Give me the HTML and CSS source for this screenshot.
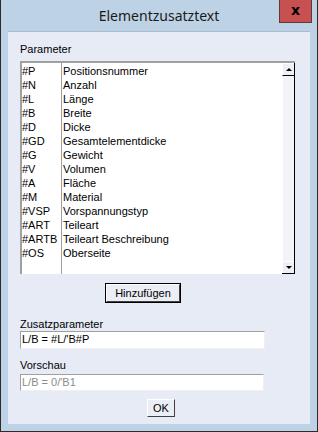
FILE: index.html
```html
<!DOCTYPE html>
<html lang="de">
<head>
  <meta charset="UTF-8">
  <title>Elementzusatztext</title>
  <link rel="stylesheet" href="styles.css">
</head>
<body>
  <div class="window">
    <div class="titlebar">
      <span class="title">Elementzusatztext</span>
      <span class="close-btn">x</span>
    </div>

    <div class="client">
      <div class="label label-first">Parameter</div>

      <div class="param-list">
        <div class="rows">
          <span>#P</span><span>Positionsnummer</span>
          <span>#N</span><span>Anzahl</span>
          <span>#L</span><span>Länge</span>
          <span>#B</span><span>Breite</span>
          <span>#D</span><span>Dicke</span>
          <span>#GD</span><span>Gesamtelementdicke</span>
          <span>#G</span><span>Gewicht</span>
          <span>#V</span><span>Volumen</span>
          <span>#A</span><span>Fläche</span>
          <span>#M</span><span>Material</span>
          <span>#VSP</span><span>Vorspannungstyp</span>
          <span>#ART</span><span>Teileart</span>
          <span>#ARTB</span><span>Teileart Beschreibung</span>
          <span>#OS</span><span>Oberseite</span>
        </div>
        <div class="scrollbar">
          <span class="sb-btn sb-up"></span>
          <span class="sb-track"></span>
          <span class="sb-btn sb-down"></span>
        </div>
      </div>

      <div class="btn-row">
        <button class="button button-default btn-add">Hinzufügen</button>
      </div>

      <div class="label label-extra">Zusatzparameter</div>
      <div class="field">L/B = #L/'B#P</div>

      <div class="label">Vorschau</div>
      <div class="field field-disabled">L/B = 0/'B1</div>

      <div class="btn-row btn-row-ok">
        <button class="button btn-ok">OK</button>
      </div>
    </div>
  </div>
</body>
</html>
```

FILE: styles.css
```css
body {
  margin: 0;
  font-family: "Liberation Sans", Arial, sans-serif;
  font-size: 11px;
  color: #000;
}

.window {
  width: 316px;
  height: 431px;
  background-color: #bdd2e5;
  border: 1px solid #2b2b2b;
  border-top: none;
  display: flex;
  flex-direction: column;
}

.titlebar {
  position: relative;
  height: 31px;
  display: flex;
  justify-content: center;
  align-items: center;
}

.title {
  font-family: "Noto Sans", sans-serif;
  font-size: 14px;
  color: #1a1a1a;
  margin-top: -1px;
}

.close-btn {
  position: absolute;
  top: 0;
  right: 5px;
  width: 31px;
  height: 20px;
  background-color: #c75050;
  border: 1px solid #5a3a3a;
  border-top: none;
  display: flex;
  justify-content: center;
  align-items: center;
  font-family: "DejaVu Sans", sans-serif;
  font-weight: bold;
  font-size: 14px;
  line-height: 1;
  padding-bottom: 2px;
  box-sizing: content-box;
}

.client {
  margin: 0 7px;
  height: 393px;
  background-color: #e6ebf5;
  border-top: 1px solid #a9bbcf;
  box-sizing: border-box;
  padding: 0 15px 0 12px;
  display: flex;
  flex-direction: column;
}

.label {
  height: 13px;
  line-height: 13px;
  margin-top: 10px;
  margin-bottom: 2px;
}

.label-first {
  margin-top: 11px;
  margin-bottom: 5px;
}

.label-extra {
  margin-top: 16px;
  margin-bottom: 0;
}

.param-list {
  height: 213px;
  width: 275px;
  display: flex;
  border-top: 2px solid #a0a0a0;
  border-left: 2px solid #a0a0a0;
  box-sizing: border-box;
}

.rows {
  flex: 1;
  display: grid;
  grid-template-columns: 41px 1fr;
  grid-auto-rows: 14px;
  align-content: start;
  padding-top: 1px;
  background: linear-gradient(#a0a0a0, #a0a0a0) no-repeat 39px 0 / 1px 100%, #fff;
}

.rows span {
  line-height: 14px;
  white-space: nowrap;
}

.scrollbar {
  width: 12px;
  display: flex;
  flex-direction: column;
  border-right: 1px solid #000;
  border-bottom: 1px solid #000;
  background-color: #f2f4f8;
}

.sb-btn {
  height: 11px;
  background-color: #eef0f4;
  border-top: 1px solid #fff;
  border-left: 1px solid #fff;
  border-bottom: 1px solid #000;
  position: relative;
}

.sb-btn::after {
  content: '';
  position: absolute;
  left: 3px;
  top: 4px;
  border-left: 3px solid transparent;
  border-right: 3px solid transparent;
}

.sb-up::after {
  border-bottom: 3px solid #000;
}

.sb-down {
  border-bottom: none;
}

.sb-down::after {
  border-top: 3px solid #000;
}

.sb-track {
  flex: 1;
  border-left: 1px solid #fff;
}

.btn-row {
  display: flex;
  margin-top: 10px;
}

.button {
  font-family: "Liberation Sans", Arial, sans-serif;
  font-size: 11px;
  color: #000;
  background-color: #ebeef5;
  border: 1px solid;
  border-color: #fff #404040 #404040 #fff;
  padding: 0;
  margin: 0;
}

.button-default {
  outline: 1px solid #000;
}

.btn-add {
  width: 74px;
  height: 18px;
  margin-left: 86px;
}

.btn-row-ok {
  margin-top: 8px;
}

.btn-ok {
  width: 28px;
  height: 18px;
  margin-left: 127px;
}

.field {
  width: 245px;
  height: 18px;
  line-height: 15px;
  box-sizing: border-box;
  background-color: #fff;
  border: 1px solid;
  border-color: #a0a0a0 #f0f0f0 #f0f0f0 #a0a0a0;
  padding-left: 1px;
}

.field-disabled {
  color: #8c8c8c;
  height: 17px;
  width: 244px;
}
```
